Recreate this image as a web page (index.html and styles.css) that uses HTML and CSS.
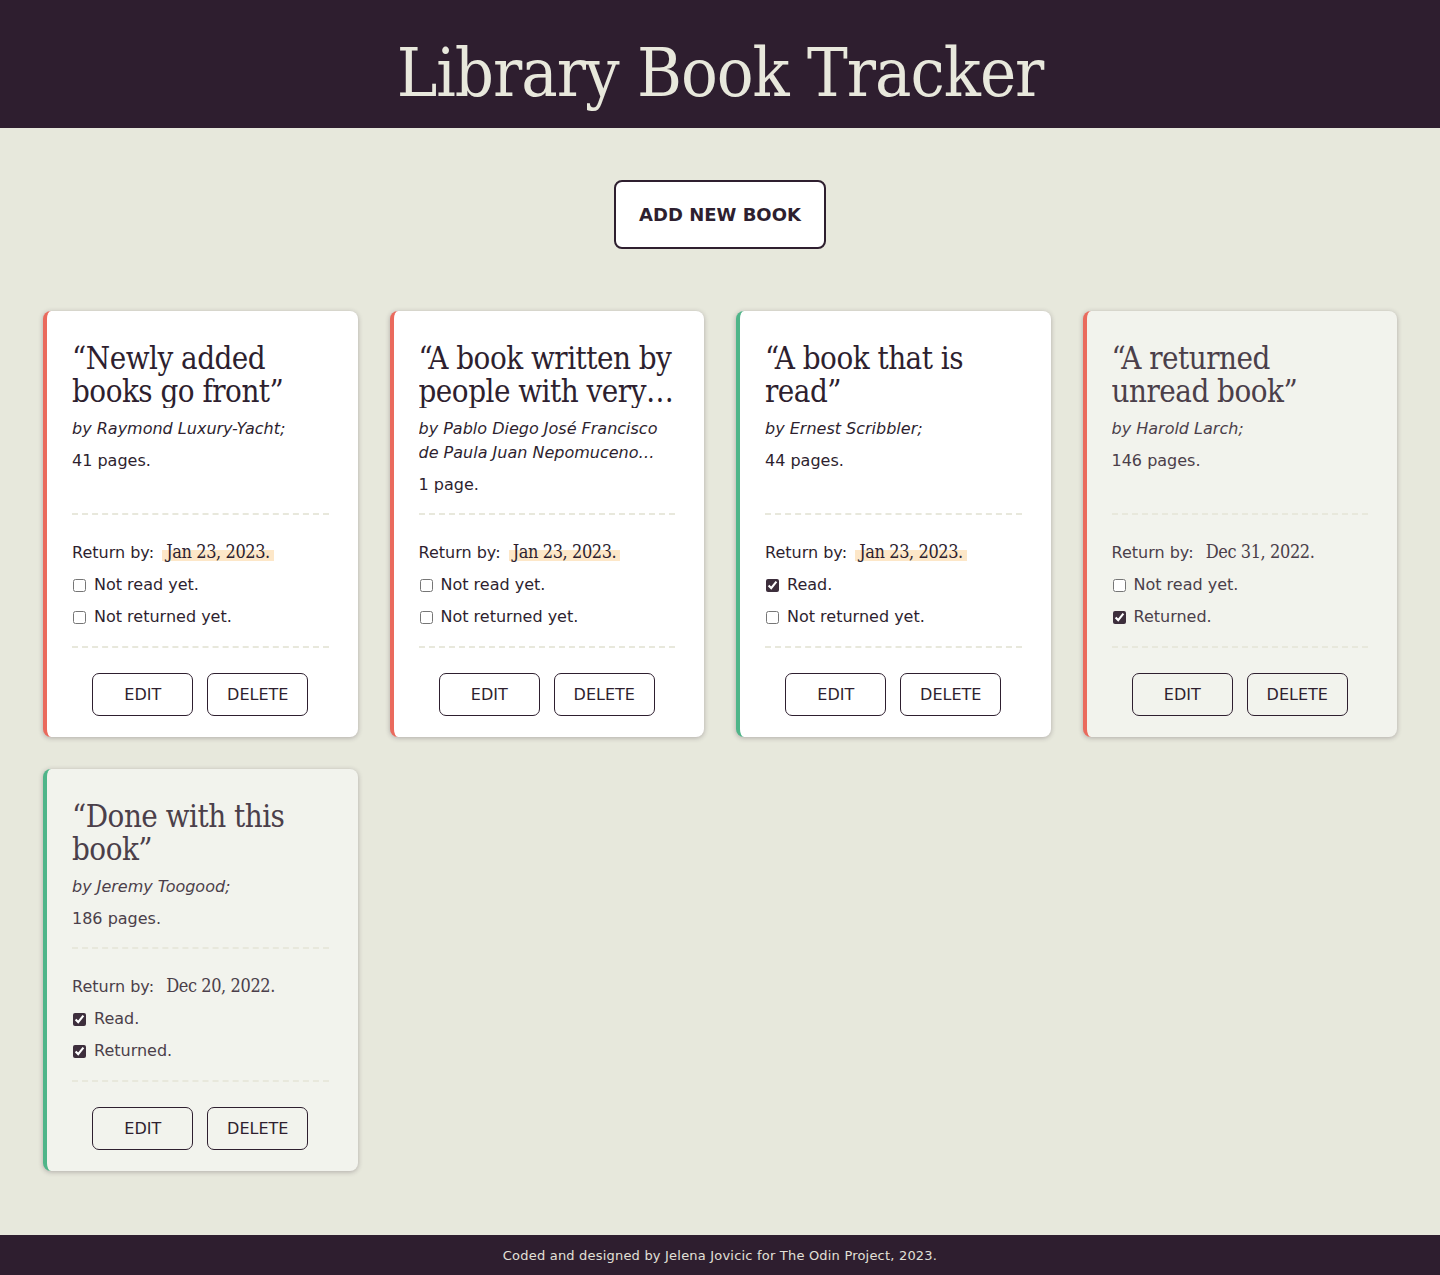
FILE: index.html
```html
<!DOCTYPE html>
<html lang="en">
<head>
<meta charset="utf-8">
<title>Library Book Tracker</title>
<link rel="stylesheet" href="styles.css">
</head>
<body>
<header class="site-header">
  <h1 class="site-title">Library Book Tracker</h1>
</header>
<main class="main">
  <div class="actions">
    <button class="add-btn" type="button">ADD NEW BOOK</button>
  </div>
  <section class="grid">
    <article class="card card--unread">
      <div class="card-info">
        <h2 class="card-title">“Newly added books go front”</h2>
        <p class="card-author">by Raymond Luxury-Yacht;</p>
        <p class="card-pages">41 pages.</p>
      </div>
      <div class="card-status">
        <p class="row">Return by: <span class="date date--due">Jan 23, 2023.</span></p>
        <label class="row check"><input type="checkbox"> Not read yet.</label>
        <label class="row check"><input type="checkbox"> Not returned yet.</label>
      </div>
      <div class="card-buttons">
        <button class="btn" type="button">EDIT</button>
        <button class="btn" type="button">DELETE</button>
      </div>
    </article>

    <article class="card card--unread">
      <div class="card-info">
        <h2 class="card-title">“A book written by people with very long names”</h2>
        <p class="card-author">by Pablo Diego José Francisco de Paula Juan Nepomuceno María de los Remedios Cipriano de la Santísima Trinidad Ruiz y Picasso;</p>
        <p class="card-pages">1 page.</p>
      </div>
      <div class="card-status">
        <p class="row">Return by: <span class="date date--due">Jan 23, 2023.</span></p>
        <label class="row check"><input type="checkbox"> Not read yet.</label>
        <label class="row check"><input type="checkbox"> Not returned yet.</label>
      </div>
      <div class="card-buttons">
        <button class="btn" type="button">EDIT</button>
        <button class="btn" type="button">DELETE</button>
      </div>
    </article>

    <article class="card card--read">
      <div class="card-info">
        <h2 class="card-title">“A book that is read”</h2>
        <p class="card-author">by Ernest Scribbler;</p>
        <p class="card-pages">44 pages.</p>
      </div>
      <div class="card-status">
        <p class="row">Return by: <span class="date date--due">Jan 23, 2023.</span></p>
        <label class="row check"><input type="checkbox" checked> Read.</label>
        <label class="row check"><input type="checkbox"> Not returned yet.</label>
      </div>
      <div class="card-buttons">
        <button class="btn" type="button">EDIT</button>
        <button class="btn" type="button">DELETE</button>
      </div>
    </article>

    <article class="card card--unread card--returned">
      <div class="card-info">
        <h2 class="card-title">“A returned unread book”</h2>
        <p class="card-author">by Harold Larch;</p>
        <p class="card-pages">146 pages.</p>
      </div>
      <div class="card-status">
        <p class="row">Return by: <span class="date">Dec 31, 2022.</span></p>
        <label class="row check"><input type="checkbox"> Not read yet.</label>
        <label class="row check"><input type="checkbox" checked> Returned.</label>
      </div>
      <div class="card-buttons">
        <button class="btn" type="button">EDIT</button>
        <button class="btn" type="button">DELETE</button>
      </div>
    </article>

    <article class="card card--read card--returned">
      <div class="card-info">
        <h2 class="card-title">“Done with this book”</h2>
        <p class="card-author">by Jeremy Toogood;</p>
        <p class="card-pages">186 pages.</p>
      </div>
      <div class="card-status">
        <p class="row">Return by: <span class="date">Dec 20, 2022.</span></p>
        <label class="row check"><input type="checkbox" checked> Read.</label>
        <label class="row check"><input type="checkbox" checked> Returned.</label>
      </div>
      <div class="card-buttons">
        <button class="btn" type="button">EDIT</button>
        <button class="btn" type="button">DELETE</button>
      </div>
    </article>
  </section>
</main>
<footer class="site-footer">
  <p>Coded and designed by Jelena Jovicic for The Odin Project, 2023.</p>
</footer>
</body>
</html>
```
FILE: styles.css
```css
* { box-sizing: border-box; }

html, body {
  margin: 0;
  padding: 0;
}

body {
  background: #e7e8dc;
  color: #2e1f2f;
  font-family: "DejaVu Sans", "Noto Sans", sans-serif;
  font-size: 16px;
  min-height: 1275px;
  display: flex;
  flex-direction: column;
}

.site-header {
  background: #2e1e2f;
  height: 128px;
  display: flex;
  align-items: center;
  justify-content: center;
  padding-top: 17px;
}

.site-title {
  margin: 0;
  color: #e8e8dc;
  font-family: "DejaVu Serif", "Liberation Serif", serif;
  font-stretch: condensed;
  font-weight: 400;
  font-size: 68px;
  line-height: 1;
  letter-spacing: -1px;
}

.main {
  flex: 1;
  padding: 52px 43px 64px;
}

.actions {
  display: flex;
  justify-content: center;
  margin-bottom: 62px;
}

.add-btn {
  background: #fff;
  color: #2e1f2f;
  border: 2px solid #2e1f2f;
  border-radius: 8px;
  font-family: "DejaVu Sans", sans-serif;
  font-weight: 700;
  font-size: 18px;
  letter-spacing: 0;
  line-height: 21px;
  white-space: nowrap;
  padding: 0;
  text-align: center;
  width: 212px;
  height: 69px;
}

.grid {
  display: grid;
  grid-template-columns: repeat(4, 1fr);
  column-gap: 32px;
  row-gap: 32px;
}

.card {
  display: flex;
  flex-direction: column;
  background: #fff;
  border-radius: 8px;
  border-left: 4px solid #ea6a5d;
  box-shadow: 0 1px 5px rgba(46, 31, 47, 0.3);
  padding: 31px 29px 21px 25px;
}

.card--read { border-left-color: #4fb589; }

.card--returned {
  background: #f2f3ed;
  color: #4b3f4a;
}

.card-info {
  flex: 1;
  padding-bottom: 16px;
}

.card-title {
  margin: 0 0 9px;
  font-family: "DejaVu Serif", "Liberation Serif", serif;
  font-stretch: condensed;
  font-weight: 400;
  font-size: 31px;
  line-height: 33px;
  letter-spacing: -0.5px;
  display: -webkit-box;
  -webkit-line-clamp: 2;
  -webkit-box-orient: vertical;
  overflow: hidden;
}

.card-author {
  margin: 0 0 8px;
  font-style: italic;
  line-height: 24px;
  display: -webkit-box;
  -webkit-line-clamp: 2;
  -webkit-box-orient: vertical;
  overflow: hidden;
}

.card-pages {
  margin: 0;
  line-height: 24px;
}

.card-status {
  border-top: 2px dashed #e8e8dc;
  padding: 25px 0 17px;
  display: flex;
  flex-direction: column;
  gap: 8px;
}

.row {
  margin: 0;
  line-height: 24px;
  height: 24px;
}

.row:first-child { margin-bottom: 1px; }

.check {
  display: flex;
  align-items: center;
}

.check input {
  margin: 0 8px 0 1px;
  width: 13px;
  height: 13px;
  accent-color: #3d2e3c;
}

.date {
  font-family: "DejaVu Serif", "Liberation Serif", serif;
  font-stretch: condensed;
  font-size: 18px;
  letter-spacing: -0.4px;
  padding: 0 4px;
  margin-left: 3px;
}

.date--due {
  background: linear-gradient(to bottom, transparent 45%, #fde7c8 45%, #fde7c8 95%, transparent 95%);
}

.card-buttons {
  border-top: 2px dashed #e8e8dc;
  padding-top: 25px;
  display: flex;
  justify-content: center;
  gap: 14px;
}

.btn {
  width: 101px;
  height: 43px;
  background: transparent;
  color: #2e1f2f;
  border: 1px solid #2e1f2f;
  border-radius: 7px;
  font-family: "DejaVu Sans", sans-serif;
  font-size: 16px;
  padding: 0;
}

.site-footer {
  background: #2e1e2f;
  height: 40px;
  display: flex;
  align-items: center;
  justify-content: center;
}

.site-footer p {
  margin: 0;
  color: #e2e0d8;
  font-size: 13px;
  letter-spacing: 0.2px;
}
```
